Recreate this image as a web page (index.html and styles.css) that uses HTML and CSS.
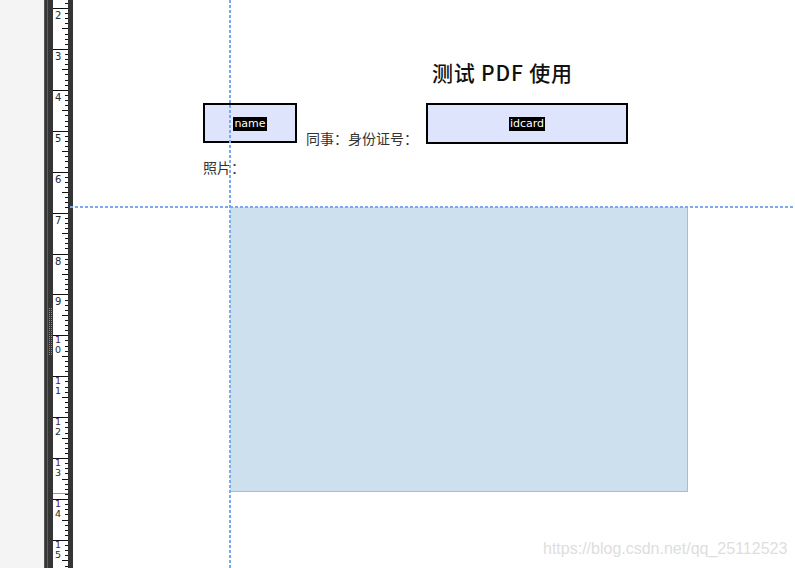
FILE: index.html
```html
<!DOCTYPE html>
<html lang="zh">
<head>
<meta charset="utf-8">
<title>测试 PDF 使用</title>
<link rel="stylesheet" href="styles.css">
</head>
<body>
<div class="app">
  <div class="side"></div>
  <div class="bar"><div class="bar-line"></div><div class="grip"></div></div>
  <div class="ruler">
    <svg class="ruler-svg" width="15" height="568" viewBox="0 0 15 568" id="ruler"></svg>
  </div>
  <div class="ruler-edge"></div>
  <div class="page">
    <div class="title-row"><h1 class="title">测试 PDF 使用</h1></div>
    <div class="field-row">
      <div class="field field-name"><span class="tag">name</span></div>
      <span class="label">同事：身份证号：</span>
      <div class="field field-id"><span class="tag">idcard</span></div>
    </div>
    <div class="photo-label">照片：</div>
    <div class="photo-box"></div>
    <div class="guide guide-v"></div>
    <div class="guide guide-h"></div>
    <div class="watermark">https://blog.csdn.net/qq_25112523</div>
  </div>
</div>
<script src="ruler.js"></script>
</body>
</html>
```

FILE: ruler.js
```js
(function () {
  var svg = document.getElementById('ruler');
  var step = 40.92;
  var y0 = 8 - step; // position of "1"
  var out = '';
  for (var n = 1; n <= 16; n++) {
    var y = y0 + (n - 1) * step;
    out += '<rect x="0" y="' + (Math.round(y)) + '" width="15" height="1" fill="#111"/>';
    for (var k = 1; k < 8; k++) {
      var ty = Math.round(y + k * step / 8);
      if (k === 4) {
        out += '<rect x="9" y="' + ty + '" width="6" height="1" fill="#111"/>';
      } else {
        out += '<rect x="12" y="' + ty + '" width="3" height="1" fill="#111"/>';
      }
    }
    if (n < 2 || n > 15) continue;
    var s = String(n);
    var base = Math.round(y);
    if (s.length === 1) {
      out += '<text x="2" y="' + (base + 11) + '" class="rl">' + s + '</text>';
    } else {
      out += '<text x="2" y="' + (base + 8) + '" class="rl rl-s rl1">' + s[0] + '</text>';
      out += '<text x="2" y="' + (base + 18) + '" class="rl rl-s">' + s[1] + '</text>';
    }
  }
  out += '<rect x="0" y="493" width="15" height="1" fill="#999"/>';
  svg.innerHTML = out;
})();
```

FILE: styles.css
```css
html, body {
  margin: 0;
  padding: 0;
  width: 795px;
  height: 568px;
  overflow: hidden;
  background: #fff;
}

.app {
  display: flex;
  width: 795px;
  height: 568px;
}

.side {
  width: 44px;
  background: #f4f4f4;
  flex: none;
}

.bar {
  width: 9px;
  flex: none;
  background: #353535;
  border-left: 1px solid #555;
  box-sizing: border-box;
  position: relative;
}

.bar-line {
  position: absolute;
  left: 2px;
  top: 0;
  bottom: 0;
  width: 1px;
  background: #5e5e5e;
}

.grip {
  position: absolute;
  left: 3px;
  top: 308px;
  width: 4px;
  height: 47px;
  background: conic-gradient(#8a8a8a 25%, transparent 0) 0 0 / 2px 2px;
}

.ruler {
  width: 15px;
  flex: none;
  background: #fff;
}

.ruler-svg {
  display: block;
}

.rl {
  font-family: "DejaVu Sans", sans-serif;
  font-size: 10px;
  fill: #1a2a3a;
}

.rl-s {
  font-size: 9.5px;
}

.rl1 {
  fill: #4a1a55;
}

.ruler-edge {
  width: 5px;
  flex: none;
  background: #353535;
}

.page {
  flex: 1;
  position: relative;
  background: #fff;
  font-family: "Noto Sans CJK SC", sans-serif;
}

.title-row {
  padding: 57px 0 0 359px;
}

.title {
  margin: 0;
  font-size: 21px;
  line-height: 30px;
  font-weight: 500;
  color: #111;
  letter-spacing: 0.8px;
}

.field-row {
  display: flex;
  align-items: flex-end;
  padding-left: 130px;
  margin-top: 16px;
  height: 41px;
}

.field {
  box-sizing: border-box;
  border: 2px solid #000;
  background: #dde4fc;
  display: flex;
  align-items: center;
  justify-content: center;
}

.field-name {
  width: 94px;
  height: 40px;
  align-self: flex-start;
}

.field-id {
  width: 202px;
  height: 41px;
  margin-left: 8px;
}

.tag {
  background: #000;
  color: #fff;
  font-family: "DejaVu Sans", sans-serif;
  font-size: 11px;
  line-height: 14px;
  padding: 0 1px;
  margin-top: 1px;
}

.label {
  margin-left: 9px;
  font-size: 14px;
  line-height: 18px;
  color: #333;
  margin-bottom: -3px;
}

.photo-label {
  margin: 14px 0 0 130px;
  font-size: 14px;
  line-height: 18px;
  color: #333;
}

.photo-box {
  position: absolute;
  left: 157px;
  top: 207px;
  width: 458px;
  height: 285px;
  box-sizing: border-box;
  background: #cde0ee;
  border-right: 1px solid #9cc1dd;
  border-bottom: 1px solid #9cc1dd;
}

.guide {
  position: absolute;
}

.guide-v {
  left: 156px;
  top: 0;
  width: 2px;
  height: 568px;
  background: repeating-linear-gradient(to bottom, #79a9ee 0 3px, transparent 3px 5px);
}

.guide-h {
  left: -3px;
  right: 0;
  top: 206px;
  height: 2px;
  background: repeating-linear-gradient(to right, #79a9ee 0 3px, transparent 3px 5px);
}

.watermark {
  position: absolute;
  left: 470px;
  top: 540px;
  font-family: "Liberation Sans", Arial, sans-serif;
  font-size: 16px;
  line-height: 18px;
  color: #dedede;
  white-space: nowrap;
}
```
